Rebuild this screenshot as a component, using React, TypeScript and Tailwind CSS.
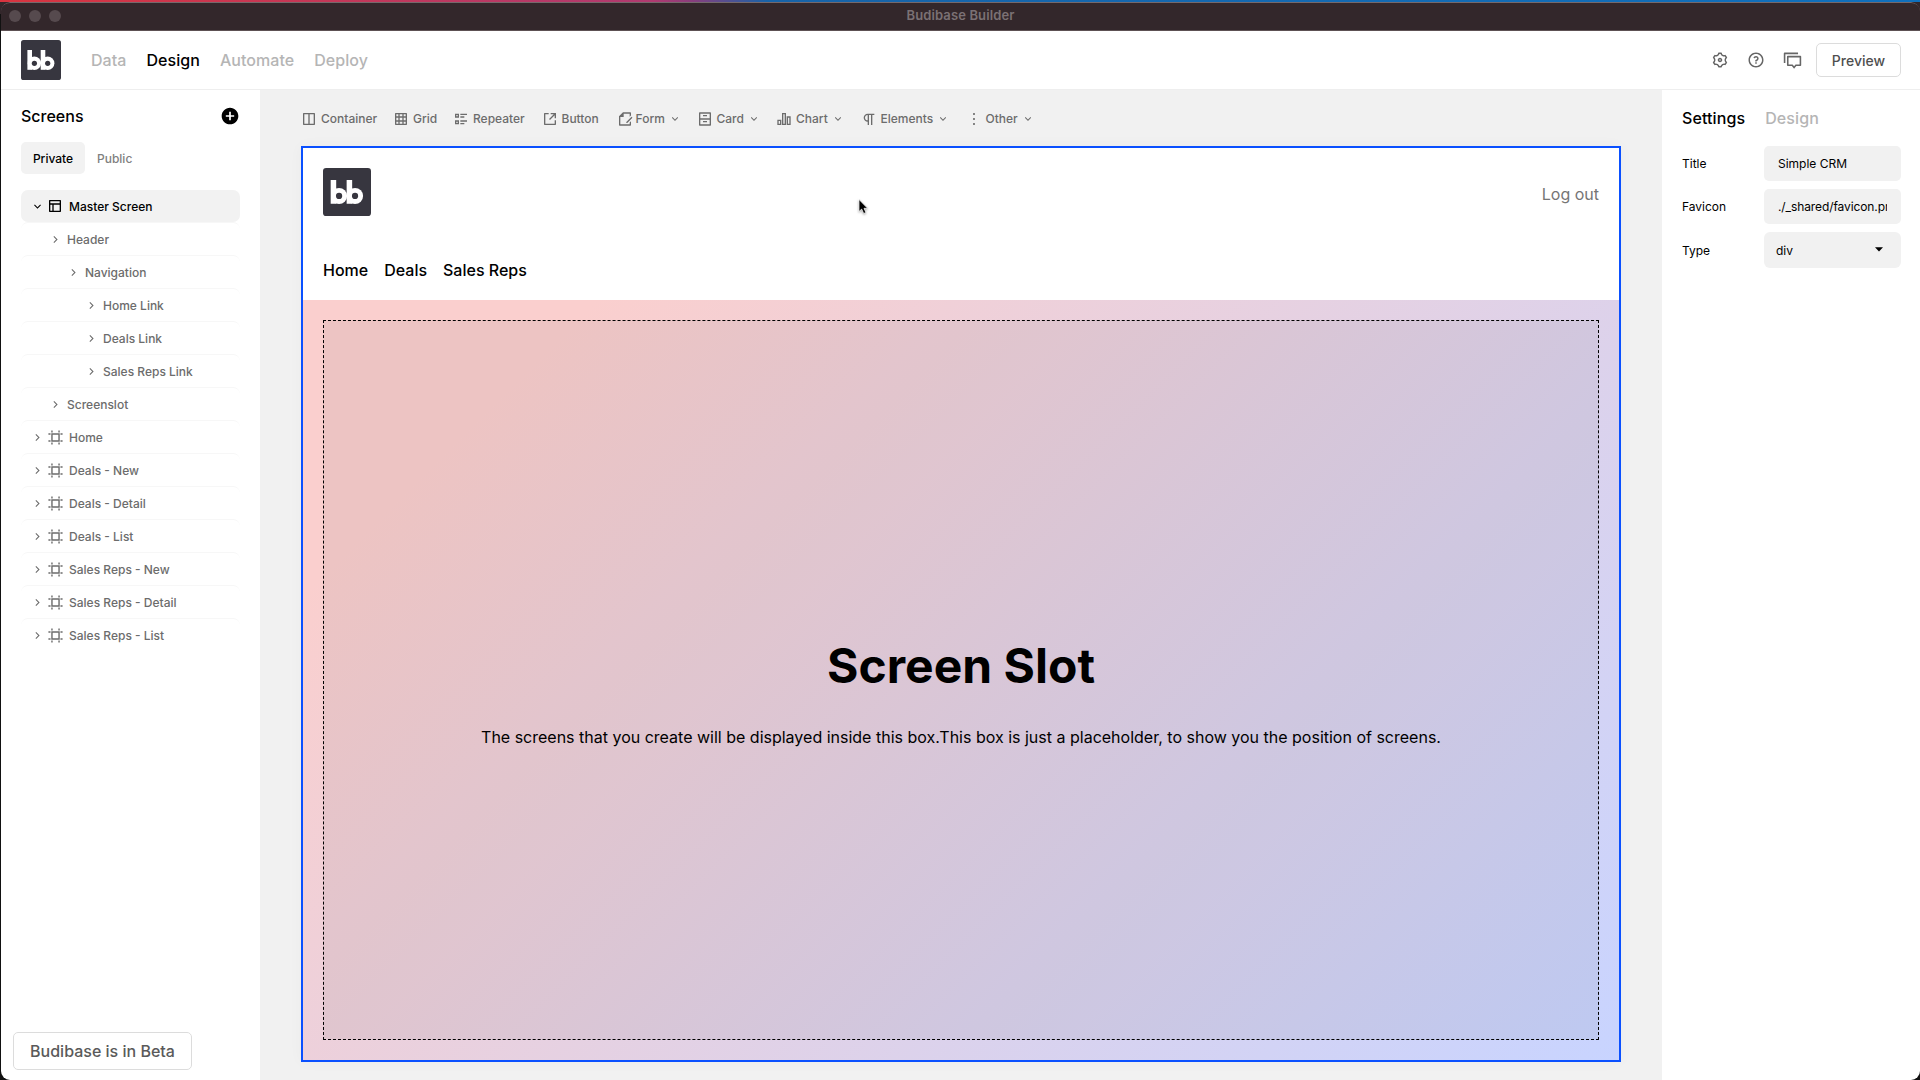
import React from "react";
import {
  RiLayoutColumnLine, RiGridLine, RiListCheck2, RiShareBoxLine, RiFileEditLine, RiArchiveDrawerLine,
  RiBarChart2Line, RiParagraph, RiMore2Line, RiArrowDownSLine, RiArrowRightSLine, RiAddCircleFill,
  RiSettings3Line, RiQuestionLine, RiDiscussLine, RiArtboard2Line, RiLayout3Line,
} from "react-icons/ri";

function Logo({ size }: { size: number }) {
  return (
    <svg width={size} height={size} viewBox="0 0 40 40" className="block shrink-0">
      <rect width="40" height="40" rx="2.6" fill="#37363f" />
      <g fill="#fff">
        <rect x="6.4" y="10" width="4.6" height="19.8" />
        <rect x="19.7" y="10" width="4.6" height="19.8" />
        <circle cx="13.4" cy="23.3" r="6.7" />
        <circle cx="26.7" cy="23.3" r="6.7" />
      </g>
      <circle cx="13.4" cy="23.3" r="2.6" fill="#37363f" />
      <circle cx="26.7" cy="23.3" r="2.6" fill="#37363f" />
    </svg>
  );
}

const tools = [
  { label: "Container", Icon: RiLayoutColumnLine, menu: false, width: "w-[92px]", gap: "ml-1" },
  { label: "Grid", Icon: RiGridLine, menu: false, width: "w-[60px]", gap: "ml-1" },
  { label: "Repeater", Icon: RiListCheck2, menu: false, width: "w-[88.5px]", gap: "ml-1" },
  { label: "Button", Icon: RiShareBoxLine, menu: false, width: "w-[75px]", gap: "ml-1" },
  { label: "Form", Icon: RiFileEditLine, menu: true, width: "w-[80px]", gap: "ml-[3px]" },
  { label: "Card", Icon: RiArchiveDrawerLine, menu: true, width: "w-[79.5px]", gap: "ml-1" },
  { label: "Chart", Icon: RiBarChart2Line, menu: true, width: "w-[84.5px]", gap: "ml-1" },
  { label: "Elements", Icon: RiParagraph, menu: true, width: "w-[105px]", gap: "ml-1" },
  { label: "Other", Icon: RiMore2Line, menu: true, width: "w-[80px]", gap: "ml-1" },
];

const tree = [
  { label: "Header", indent: "pl-[26px]", screen: false },
  { label: "Navigation", indent: "pl-[44px]", screen: false },
  { label: "Home Link", indent: "pl-[62px]", screen: false },
  { label: "Deals Link", indent: "pl-[62px]", screen: false },
  { label: "Sales Reps Link", indent: "pl-[62px]", screen: false },
  { label: "Screenslot", indent: "pl-[26px]", screen: false },
  { label: "Home", indent: "pl-2", screen: true },
  { label: "Deals - New", indent: "pl-2", screen: true },
  { label: "Deals - Detail", indent: "pl-2", screen: true },
  { label: "Deals - List", indent: "pl-2", screen: true },
  { label: "Sales Reps - New", indent: "pl-2", screen: true },
  { label: "Sales Reps - Detail", indent: "pl-2", screen: true },
  { label: "Sales Reps - List", indent: "pl-2", screen: true },
];

function TitleBar() {
  return (
    <div className="relative flex h-[29px] shrink-0 items-center rounded-t-[9px] border-t border-b border-t-[#75696c] border-b-[#5d5154] bg-[#33272b] pl-2">
      <div className="mb-px flex gap-2">
        <span className="size-3 rounded-full bg-[#564a4e]" />
        <span className="size-3 rounded-full bg-[#564a4e]" />
        <span className="size-3 rounded-full bg-[#564a4e]" />
      </div>
      <div className="absolute inset-x-0 top-0 text-center text-[13px] leading-6 font-semibold tracking-[0.12px] text-[#7b7174]">Budibase Builder</div>
    </div>
  );
}

function TopNav() {
  return (
    <header className="flex h-[59px] shrink-0 items-center border-b border-[#eeeeee] bg-white pr-[19px] pl-5">
      <Logo size={40} />
      <nav className="ml-[30px] flex gap-5 text-base font-medium tracking-[0.05px] text-[#b5b5b5]">
        <span>Data</span>
        <span className="text-black">Design</span>
        <span>Automate</span>
        <span>Deploy</span>
      </nav>
      <div className="ml-auto flex items-center gap-[18px] text-[#666]">
        <RiSettings3Line size={18} />
        <RiQuestionLine size={18} />
        <RiDiscussLine size={19} />
      </div>
      <button className="ml-[14px] h-[34px] w-[85px] rounded-[5px] border border-[#dcdcdc] pt-px text-sm font-medium text-[#4f4f4f]">Preview</button>
    </header>
  );
}

function Sidebar() {
  return (
    <aside className="flex w-[259px] shrink-0 flex-col bg-white px-5">
      <div className="mt-4 flex h-5 items-center justify-between">
        <h2 className="text-base font-medium text-black">Screens</h2>
        <RiAddCircleFill size={20} className="text-black" />
      </div>
      <div className="mt-4 flex h-8 text-xs font-medium">
        <span className="flex w-16 items-center justify-center rounded-[5px] bg-[#f2f2f2] pt-0.5 text-black">Private</span>
        <span className="flex items-center px-3 pt-0.5 text-[#808080]">Public</span>
      </div>
      <div className="mt-4 flex h-8 items-center rounded-[7px] bg-[#f2f2f2] pl-2 text-xs font-medium text-black">
        <RiArrowDownSLine size={13} className="mx-[1.5px]" />
        <RiLayout3Line size={16} className="mr-1.5 ml-0.5" />
        <span className="pt-0.5">Master Screen</span>
      </div>
      {tree.map(({ label, indent, screen }) => (
        <div key={label} className={"flex h-[33px] w-[219px] shrink-0 items-center rounded-[7px] border-t border-[#f7f7f7] text-xs font-medium text-[#6c6c6c] " + indent}>
          <RiArrowRightSLine size={13} className="mx-[1.5px]" />
          {screen ? <RiArtboard2Line size={17} className="mr-[5.5px] ml-[1.5px]" /> : <span className="w-1" />}
          <span className="pt-0.5">{label}</span>
        </div>
      ))}
      <div className="mt-auto mb-[10px] -ml-2 flex h-[38px] w-[179px] items-center justify-center rounded-[5px] border border-[#dcdcdc] text-base font-medium text-[#5a5a5a]">
        Budibase is in Beta
      </div>
    </aside>
  );
}

function Canvas() {
  return (
    <main className="relative flex w-[1402px] shrink-0 flex-col bg-[#f1f1f1] px-[41px]">
      <div className="mt-[18.5px] flex h-5 items-center text-xs font-medium text-[#6c6c6c]">
        {tools.map(({ label, Icon, menu, width, gap }) => (
          <div key={label} className={"flex shrink-0 items-center " + width}>
            <Icon size={16} className="shrink-0" />
            <span className={gap}>{label}</span>
            {menu && <RiArrowDownSLine size={12} className="ml-1 shrink-0" />}
          </div>
        ))}
      </div>
      <section className="mt-[17.5px] flex h-[916px] w-[1320px] flex-col border-2 border-[#0a50ff] bg-[linear-gradient(135deg,#facfce_20%,#c8d4ff_100%)] shadow-[0_0_14px_rgba(0,0,0,0.03)]">
        <div className="flex h-[152px] shrink-0 flex-col bg-white px-5 pt-5">
          <div className="flex h-12 items-start justify-between">
            <Logo size={48} />
            <span className="mt-3.5 text-base text-[#757575]">Log out</span>
          </div>
          <nav className="mt-[42px] flex gap-4 text-base font-medium text-black">
            <span>Home</span>
            <span>Deals</span>
            <span>Sales Reps</span>
          </nav>
        </div>
        <div className="mx-5 my-5 flex flex-1 flex-col items-center justify-center border border-dashed border-black bg-black/5 pt-[26px] text-black">
          <h1 className="text-5xl leading-[58px] font-bold">Screen Slot</h1>
          <p className="mt-[30px] text-base">The screens that you create will be displayed inside this box.This box is just a placeholder, to show you the position of screens.</p>
        </div>
      </section>
      <svg width="14" height="20" viewBox="0 0 14 20" className="absolute top-[108px] left-[598px] drop-shadow-[0_1px_1px_rgba(0,0,0,0.35)]">
        <path d="M1 1.5v12l2.7-2.4 2 4.4 2.2-1-1.9-4.2H9.6z" fill="#000" stroke="#fff" strokeWidth=".7" />
      </svg>
    </main>
  );
}

function Settings() {
  return (
    <aside className="w-[258px] bg-white pr-[19px] pl-5 text-xs text-black">
      <div className="mt-4 flex h-6 items-center gap-5 text-base font-medium tracking-[0.1px]">
        <span>Settings</span>
        <span className="text-[#b5b5b5]">Design</span>
      </div>
      <div className="mt-4 flex items-center justify-between">
        <span>Title</span>
        <div className="flex h-[35px] w-[137px] items-center rounded-[5px] bg-[#f1f1f1] px-3.5">Simple CRM</div>
      </div>
      <div className="mt-2 flex items-center justify-between">
        <span>Favicon</span>
        <div className="flex h-[35px] w-[137px] items-center rounded-[5px] bg-[#f1f1f1] px-3.5">
          <span className="w-full overflow-hidden tracking-[-0.1px] whitespace-nowrap">./_shared/favicon.png</span>
        </div>
      </div>
      <div className="mt-2 flex items-center justify-between">
        <span className="pt-0.5">Type</span>
        <div className="flex h-9 w-[137px] items-center justify-between rounded-[6px] bg-[#f1f1f1] pr-[18px] pl-3">
          <span className="pt-0.5">div</span>
          <svg width="8" height="5" viewBox="0 0 8 5" className="mb-0.5"><path d="M0 .3h8L4 4.5z" /></svg>
        </div>
      </div>
    </aside>
  );
}

export default function App() {
  return (
    <div className="h-[1080px] w-[1920px] overflow-hidden bg-[linear-gradient(90deg,#d8343f_0%,#b03a70_34%,#8a3d7c_36%,#1763a8_40%,#0f70bd_100%)] pt-0.5 font-['Inter',sans-serif]">
      <div className="h-[1078px] bg-[linear-gradient(#33272b_0,#33272b_12px,#111_12px)] pl-px">
        <div className="flex h-[1078px] flex-col overflow-hidden rounded-t-[9px] rounded-b-[9px]">
          <TitleBar />
          <TopNav />
          <div className="flex min-h-0 flex-1">
            <Sidebar />
            <Canvas />
            <Settings />
          </div>
        </div>
      </div>
    </div>
  );
}
